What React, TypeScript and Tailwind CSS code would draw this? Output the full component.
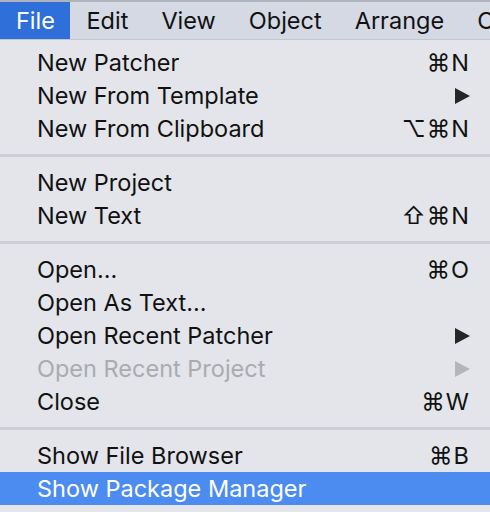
import React from 'react';

type Item = {
  label: string;
  shortcut?: string;
  submenu?: boolean;
  disabled?: boolean;
  active?: boolean;
};

const groups: Item[][] = [
  [
    { label: 'New Patcher', shortcut: '⌘N' },
    { label: 'New From Template', submenu: true },
    { label: 'New From Clipboard', shortcut: '⌥⌘N' },
  ],
  [
    { label: 'New Project' },
    { label: 'New Text', shortcut: '⇧⌘N' },
  ],
  [
    { label: 'Open...', shortcut: '⌘O' },
    { label: 'Open As Text...' },
    { label: 'Open Recent Patcher', submenu: true },
    { label: 'Open Recent Project', submenu: true, disabled: true },
    { label: 'Close', shortcut: '⌘W' },
  ],
  [
    { label: 'Show File Browser', shortcut: '⌘B' },
    { label: 'Show Package Manager', active: true },
  ],
];

const menus = ['File', 'Edit', 'View', 'Object', 'Arrange', 'Options'];

const Row: React.FC<{ item: Item }> = ({ item }) => {
  const color = item.active ? 'text-white' : item.disabled ? 'text-[#a9abb0]' : 'text-[#111111]';
  return (
    <div className={`flex h-[33px] items-center justify-between pl-[37px] pr-[20px] ${item.active ? 'bg-[#4c8bf0]' : ''} ${color}`}>
      <span>{item.label}</span>
      {item.shortcut && <span className="tracking-[1px]">{item.shortcut}</span>}
      {item.submenu && (
        <svg width="15" height="16" viewBox="0 0 15 16" className={item.disabled ? 'fill-[#b3b5ba]' : 'fill-[#262626]'}>
          <path d="M0 0 L15 8 L0 16 Z" />
        </svg>
      )}
    </div>
  );
};

export default function App() {
  return (
    <div className="w-[490px] h-[512px] overflow-hidden bg-[#e3e5ea] text-[23.5px] leading-none font-['Inter','DejaVu_Sans',sans-serif]">
      <div className="h-[2px] bg-[#aeb2ba]" />
      <div className="flex h-[38px] items-center bg-[#d4d9e4] border-b border-[#c3c6cd] whitespace-nowrap">
        {menus.map((m, i) => (
          <div
            key={m}
            className={`flex h-full items-center ${i === 0 ? 'bg-[#2f6fd9] text-white pl-[16px] pr-[15px]' : 'text-[#111111] px-[16.5px]'}`}
          >
            {m}
          </div>
        ))}
      </div>
      <div className="pt-[6px]">
        {groups.map((g, gi) => (
          <div key={gi}>
            {gi > 0 && (
              <div className="py-[9px]">
                <div className="h-[3px] bg-[#cbced4]" />
              </div>
            )}
            {g.map((item) => (
              <Row key={item.label} item={item} />
            ))}
          </div>
        ))}
      </div>
    </div>
  );
}
